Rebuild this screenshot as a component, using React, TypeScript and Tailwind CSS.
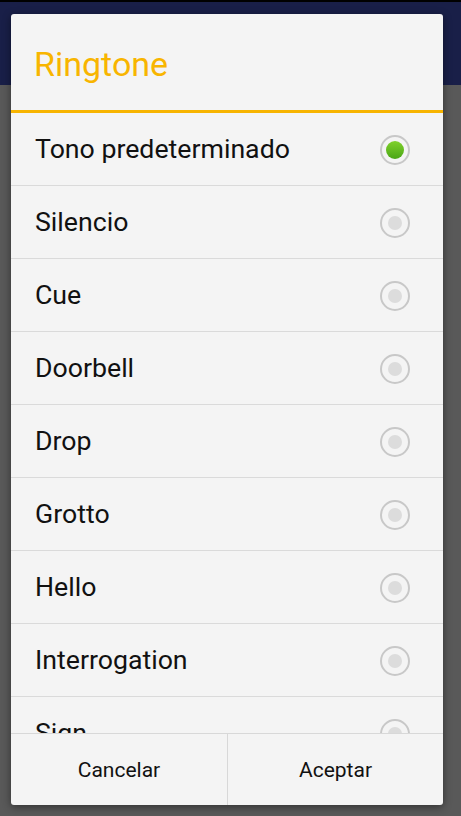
import React, { useState } from 'react';

const tonos = [
  'Tono predeterminado',
  'Silencio',
  'Cue',
  'Doorbell',
  'Drop',
  'Grotto',
  'Hello',
  'Interrogation',
  'Sign',
];

const Radio = ({ checked }: { checked: boolean }) => (
  <div className="w-[30px] h-[30px] rounded-full border-2 border-[#c8c8c8] flex items-center justify-center">
    {checked ? (
      <div className="w-[18px] h-[18px] rounded-full bg-gradient-to-b from-[#7fd12c] to-[#4aa616]" />
    ) : (
      <div className="w-[14px] h-[14px] rounded-full bg-[#dcdcdc]" />
    )}
  </div>
);

const App = () => {
  const [selected, setSelected] = useState(0);

  return (
    <div className="relative w-[461px] h-[816px] overflow-hidden bg-[#595959] font-['Roboto',sans-serif]">
      {/* barra de fondo */}
      <div className="h-[85px] bg-[#191f48] border-t-2 border-black" />

      {/* Dialogo */}
      <div className="absolute left-[11px] top-[14px] w-[432px] h-[791px] bg-[#f4f4f4] rounded-[3px] shadow-[0_2px_8px_rgba(0,0,0,0.45)] flex flex-col overflow-hidden">
        <div className="h-[96px] shrink-0 flex items-center pl-[23px] pt-[4px]">
          <h2 className="text-[34px] text-[#f8b500] leading-none">Ringtone</h2>
        </div>
        <div className="h-[3px] shrink-0 bg-[#f7b400]" />

        <div className="flex-1 overflow-hidden">
          {tonos.map((t, i) => (
            <div
              key={t}
              onClick={() => setSelected(i)}
              className="h-[73px] border-b border-[#dadada] flex items-center justify-between pl-[24px] pr-[33px] pt-[1px]"
            >
              <span className="text-[26.7px] text-[#111]">{t}</span>
              <Radio checked={selected === i} />
            </div>
          ))}
        </div>

        <div className="h-[72px] shrink-0 border-t border-[#d8d8d8] grid grid-cols-2">
          <button className="flex items-center justify-center text-[21px] text-[#111] pt-[2px]">Cancelar</button>
          <button className="flex items-center justify-center text-[21px] text-[#111] pt-[2px] border-l border-[#d8d8d8]">Aceptar</button>
        </div>
      </div>
    </div>
  );
};

export default App;
